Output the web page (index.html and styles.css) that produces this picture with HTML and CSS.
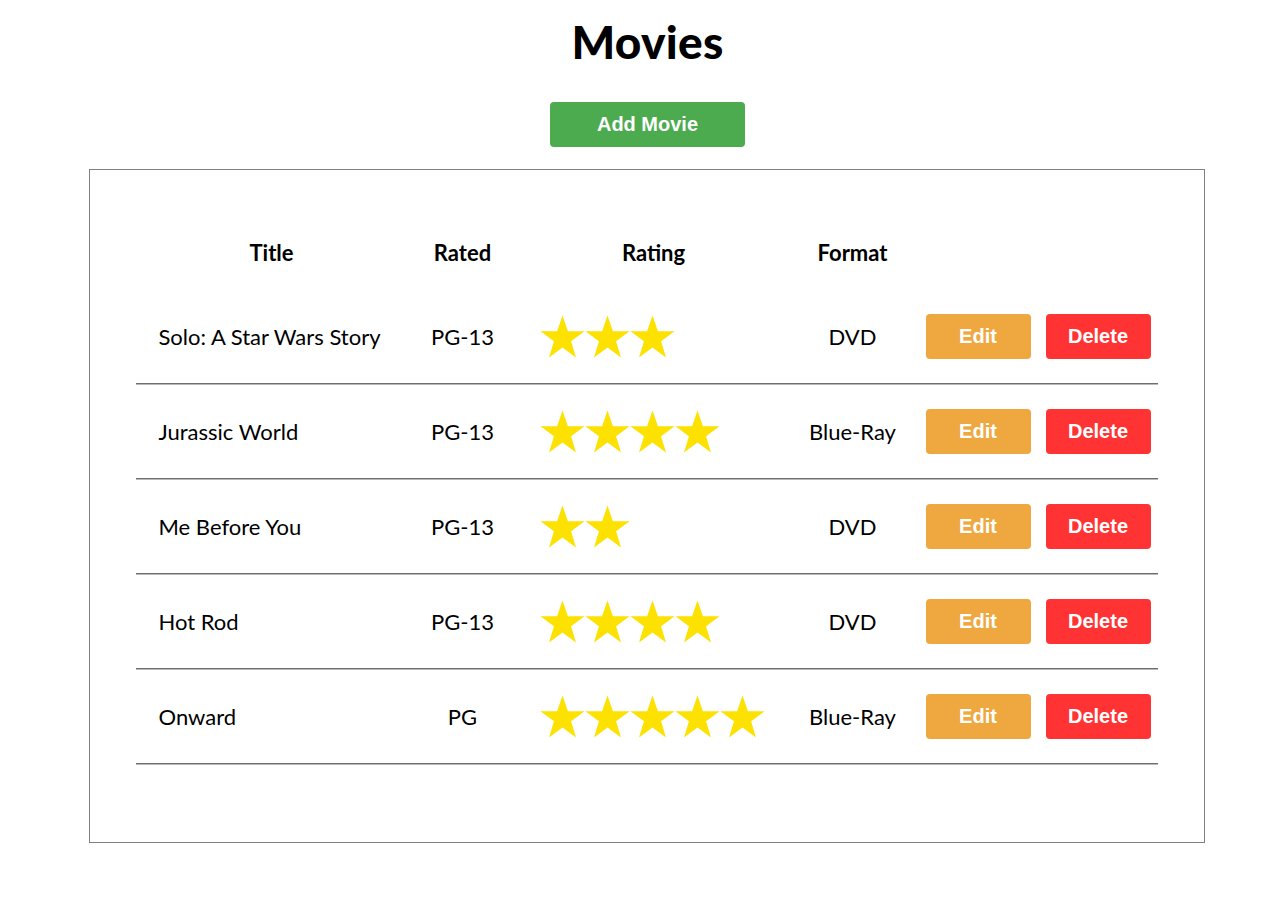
FILE: index.html
```html
<!DOCTYPE html>
<html lang="en">
<head>
<meta charset="utf-8">
<title>Movies</title>
<link rel="stylesheet" href="styles.css">
</head>
<body>
<svg width="0" height="0" class="defs" aria-hidden="true">
  <defs>
    <symbol id="star" viewBox="0 0 100 95">
      <polygon points="50,1 62,36 99,36 69,58 80,94 50,72 20,94 31,58 1,36 38,36" fill="#fde101"/>
    </symbol>
  </defs>
</svg>
<div class="page">
  <h1 class="title">Movies</h1>
  <button class="btn btn-add">Add Movie</button>
  <div class="panel">
    <div class="table">
      <div class="row head">
        <div class="cell c-title">Title</div>
        <div class="cell c-rated">Rated</div>
        <div class="cell c-rating">Rating</div>
        <div class="cell c-format">Format</div>
        <div class="cell c-actions"></div>
      </div>

      <div class="row">
        <div class="cell c-title">Solo: A Star Wars Story</div>
        <div class="cell c-rated">PG-13</div>
        <div class="cell c-rating"><svg class="star"><use href="#star"/></svg><svg class="star"><use href="#star"/></svg><svg class="star"><use href="#star"/></svg></div>
        <div class="cell c-format">DVD</div>
        <div class="cell c-actions"><button class="btn btn-edit">Edit</button><button class="btn btn-del">Delete</button></div>
      </div>

      <div class="row">
        <div class="cell c-title">Jurassic World</div>
        <div class="cell c-rated">PG-13</div>
        <div class="cell c-rating"><svg class="star"><use href="#star"/></svg><svg class="star"><use href="#star"/></svg><svg class="star"><use href="#star"/></svg><svg class="star"><use href="#star"/></svg></div>
        <div class="cell c-format">Blue-Ray</div>
        <div class="cell c-actions"><button class="btn btn-edit">Edit</button><button class="btn btn-del">Delete</button></div>
      </div>

      <div class="row">
        <div class="cell c-title">Me Before You</div>
        <div class="cell c-rated">PG-13</div>
        <div class="cell c-rating"><svg class="star"><use href="#star"/></svg><svg class="star"><use href="#star"/></svg></div>
        <div class="cell c-format">DVD</div>
        <div class="cell c-actions"><button class="btn btn-edit">Edit</button><button class="btn btn-del">Delete</button></div>
      </div>

      <div class="row">
        <div class="cell c-title">Hot Rod</div>
        <div class="cell c-rated">PG-13</div>
        <div class="cell c-rating"><svg class="star"><use href="#star"/></svg><svg class="star"><use href="#star"/></svg><svg class="star"><use href="#star"/></svg><svg class="star"><use href="#star"/></svg></div>
        <div class="cell c-format">DVD</div>
        <div class="cell c-actions"><button class="btn btn-edit">Edit</button><button class="btn btn-del">Delete</button></div>
      </div>

      <div class="row">
        <div class="cell c-title">Onward</div>
        <div class="cell c-rated">PG</div>
        <div class="cell c-rating"><svg class="star"><use href="#star"/></svg><svg class="star"><use href="#star"/></svg><svg class="star"><use href="#star"/></svg><svg class="star"><use href="#star"/></svg><svg class="star"><use href="#star"/></svg></div>
        <div class="cell c-format">Blue-Ray</div>
        <div class="cell c-actions"><button class="btn btn-edit">Edit</button><button class="btn btn-del">Delete</button></div>
      </div>
    </div>
  </div>
</div>
</body>
</html>
```

FILE: styles.css
```css
html, body {
  margin: 0;
  padding: 0;
  background: #ffffff;
}

body {
  font-family: "Lato", "Open Sans", sans-serif;
  color: #000;
}

.defs {
  position: absolute;
  width: 0;
  height: 0;
  overflow: hidden;
}

.page {
  display: flex;
  flex-direction: column;
  align-items: center;
  padding-left: 30px;
}

.title {
  margin: 16px 0 0 0;
  font-size: 46px;
  line-height: 52px;
  font-weight: 900;
  letter-spacing: 0.3px;
}

.btn {
  border: none;
  border-radius: 4px;
  color: #fff;
  font-family: "Liberation Sans", Arial, sans-serif;
  font-weight: bold;
  font-size: 20px;
  height: 45px;
  padding: 0;
  cursor: pointer;
}

.btn-add {
  margin-top: 34px;
  width: 195px;
  background: #4caa4f;
}

.panel {
  margin-top: 22px;
  margin-right: 2px;
  width: 1022px;
  border: 1px solid #808080;
  padding: 46px 46px 78px 46px;
}

.table {
  display: flex;
  flex-direction: column;
}

.row {
  box-sizing: border-box;
  display: grid;
  grid-template-columns: 272px 110px 272px 126px 242px;
  align-items: center;
  height: 95px;
  border-bottom: 1px solid #6e6e6e;
  box-shadow: 0 1px 0 #b8b8b8;
  font-size: 22px;
}

.row.head {
  height: 73px;
  border-bottom: none;
  box-shadow: none;
  font-weight: bold;
}

.cell {
  text-align: center;
}

.row .c-title {
  text-align: left;
  padding-left: 23px;
}

.row.head .c-title {
  text-align: center;
  padding-left: 0;
}

.c-rating {
  display: flex;
  padding-left: 22px;
}

.row.head .c-rating {
  display: block;
  padding-left: 0;
}

.star {
  width: 45px;
  height: 43px;
  display: block;
}

.c-actions {
  display: flex;
  gap: 15px;
  padding-left: 10px;
}

.btn-edit {
  width: 105px;
  background: #efa73f;
}

.btn-del {
  width: 105px;
  background: #ff3333;
}
```
